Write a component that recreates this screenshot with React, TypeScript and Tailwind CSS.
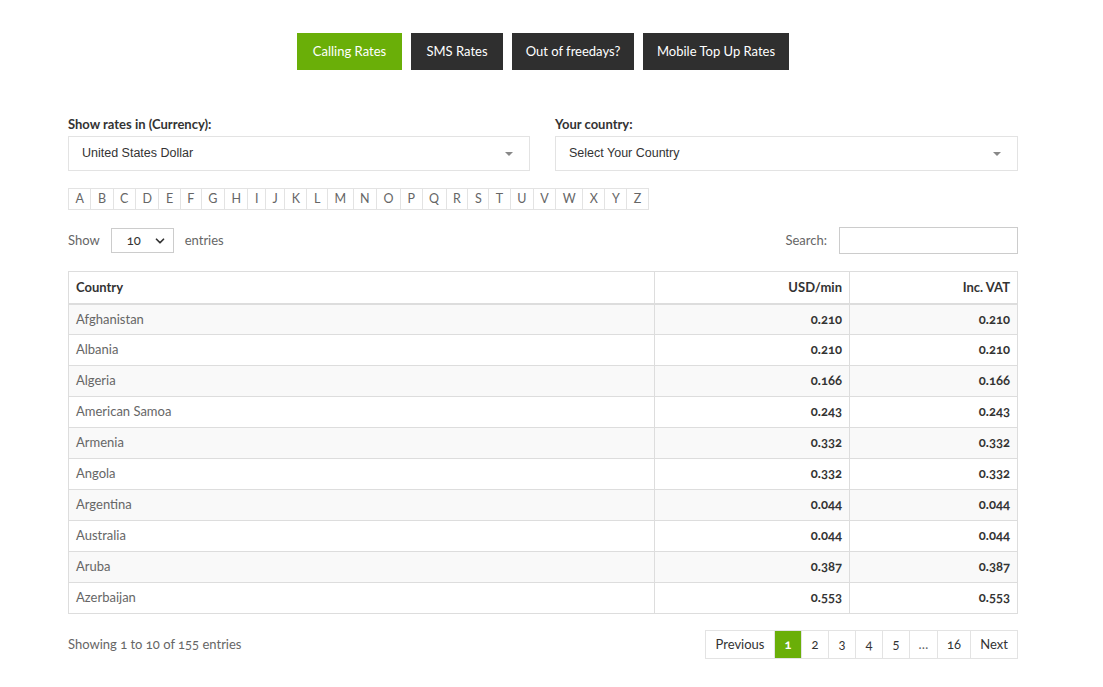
import { ChevronDown } from 'lucide-react'

const tabs = [
  { label: 'Calling Rates', active: true, w: 'w-[105px]' },
  { label: 'SMS Rates', active: false, w: 'w-[92px]' },
  { label: 'Out of freedays?', active: false, w: 'w-[122px]' },
  { label: 'Mobile Top Up Rates', active: false, w: 'w-[146px]' },
]

const letters = 'ABCDEFGHIJKLMNOPQRSTUVWXYZ'.split('')

const rows: [string, string][] = [
  ['Afghanistan', '0.210'],
  ['Albania', '0.210'],
  ['Algeria', '0.166'],
  ['American Samoa', '0.243'],
  ['Armenia', '0.332'],
  ['Angola', '0.332'],
  ['Argentina', '0.044'],
  ['Australia', '0.044'],
  ['Aruba', '0.387'],
  ['Azerbaijan', '0.553'],
]

const pages = ['Previous', '1', '2', '3', '4', '5', '…', '16', 'Next']

function Caret() {
  return <span className="w-0 h-0 border-l-[4px] border-r-[4px] border-t-[4px] border-l-transparent border-r-transparent border-t-[#888]" />
}

export default function App() {
  return (
    <div className="min-h-[687px] bg-white font-['Lato','Open_Sans',sans-serif] [font-feature-settings:'onum'] text-[13px] text-[#555]">
      <div className="w-[950px] ml-[68px] pt-[33px]">
        {/* tabs */}
        <div className="flex justify-center gap-[9px]">
          {tabs.map((t) => (
            <div
              key={t.label}
              className={`${t.w} h-[37px] flex items-center justify-center text-[13px] text-white ${t.active ? 'bg-[#6aaf08]' : 'bg-[#2f2f2f]'}`}
            >
              {t.label}
            </div>
          ))}
        </div>

        {/* selects */}
        <div className="grid grid-cols-[462px_463px] gap-[25px] mt-[45px]">
          {[
            ['Show rates in (Currency):', 'United States Dollar'],
            ['Your country:', 'Select Your Country'],
          ].map(([label, value]) => (
            <div key={label}>
              <div className="text-[13px] font-bold text-[#333] leading-[18px]">{label}</div>
              <div className="mt-[3px] h-[35px] border border-[#e3e3e3] flex items-center justify-between pl-[13px] pr-[16px] font-['Liberation_Sans',Arial,sans-serif] text-[12.5px] text-[#333]">
                <span>{value}</span>
                <Caret />
              </div>
            </div>
          ))}
        </div>

        {/* alphabet */}
        <div className="flex mt-[17px]">
          <div className="flex border border-[#e3e3e3]">
            {letters.map((l, i) => (
              <span
                key={l}
                className={`h-[20px] px-[6.5px] flex items-center text-[12.5px] text-[#666] ${i ? 'border-l border-[#e3e3e3]' : ''}`}
              >
                {l}
              </span>
            ))}
          </div>
        </div>

        {/* show / search */}
        <div className="flex items-center justify-between mt-[17px]">
          <div className="flex items-center gap-[11px] text-[#666]">
            <span>Show</span>
            <div className="w-[63px] h-[25px] border border-[#ccc] flex items-center justify-between pl-[15px] pr-[6px] text-[#333]">
              <span>10</span>
              <ChevronDown size={14} strokeWidth={3} className="text-[#333]" />
            </div>
            <span>entries</span>
          </div>
          <div className="flex items-center gap-[12px] text-[#666]">
            <span>Search:</span>
            <div className="w-[179px] h-[27px] border border-[#ccc]" />
          </div>
        </div>

        {/* table */}
        <table className="w-full mt-[17px] border-collapse border border-[#ddd]">
          <thead>
            <tr className="h-[32px] text-[#333] font-bold">
              <th className="text-left pl-[7px] border border-[#ddd] border-b-2 w-[586px]">Country</th>
              <th className="text-right pr-[7px] border border-[#ddd] border-b-2 w-[195px]">USD/min</th>
              <th className="text-right pr-[7px] border border-[#ddd] border-b-2">Inc. VAT</th>
            </tr>
          </thead>
          <tbody>
            {rows.map(([c, r], i) => (
              <tr key={c} className={`h-[31px] ${i % 2 === 0 ? 'bg-[#f9f9f9]' : 'bg-white'}`}>
                <td className="pl-[7px] border border-[#ddd] text-[#666]">{c}</td>
                <td className="text-right pr-[7px] border border-[#ddd] font-bold text-[#333] text-[13px]">{r}</td>
                <td className="text-right pr-[7px] border border-[#ddd] font-bold text-[#333] text-[13px]">{r}</td>
              </tr>
            ))}
          </tbody>
        </table>

        {/* footer */}
        <div className="flex items-center justify-between mt-[16px]">
          <span className="text-[#666]">Showing 1 to 10 of 155 entries</span>
          <div className="flex border border-[#e3e3e3]">
            {pages.map((p, i) => (
              <span
                key={p}
                className={`h-[27px] flex items-center justify-center ${i ? 'border-l border-[#e3e3e3]' : ''} ${p === 'Previous' ? 'w-[68px]' : ''} ${p === 'Next' ? 'w-[47px]' : ''} ${p.length === 1 ? 'w-[27px]' : ''} ${p === '1' ? 'bg-[#6aaf08] text-white font-bold' : 'text-[#333]'} ${p === '16' ? 'w-[33px]' : ''} ${p === '…' ? 'w-[28px] text-[#666]' : ''}`}
              >
                {p}
              </span>
            ))}
          </div>
        </div>
      </div>
    </div>
  )
}
